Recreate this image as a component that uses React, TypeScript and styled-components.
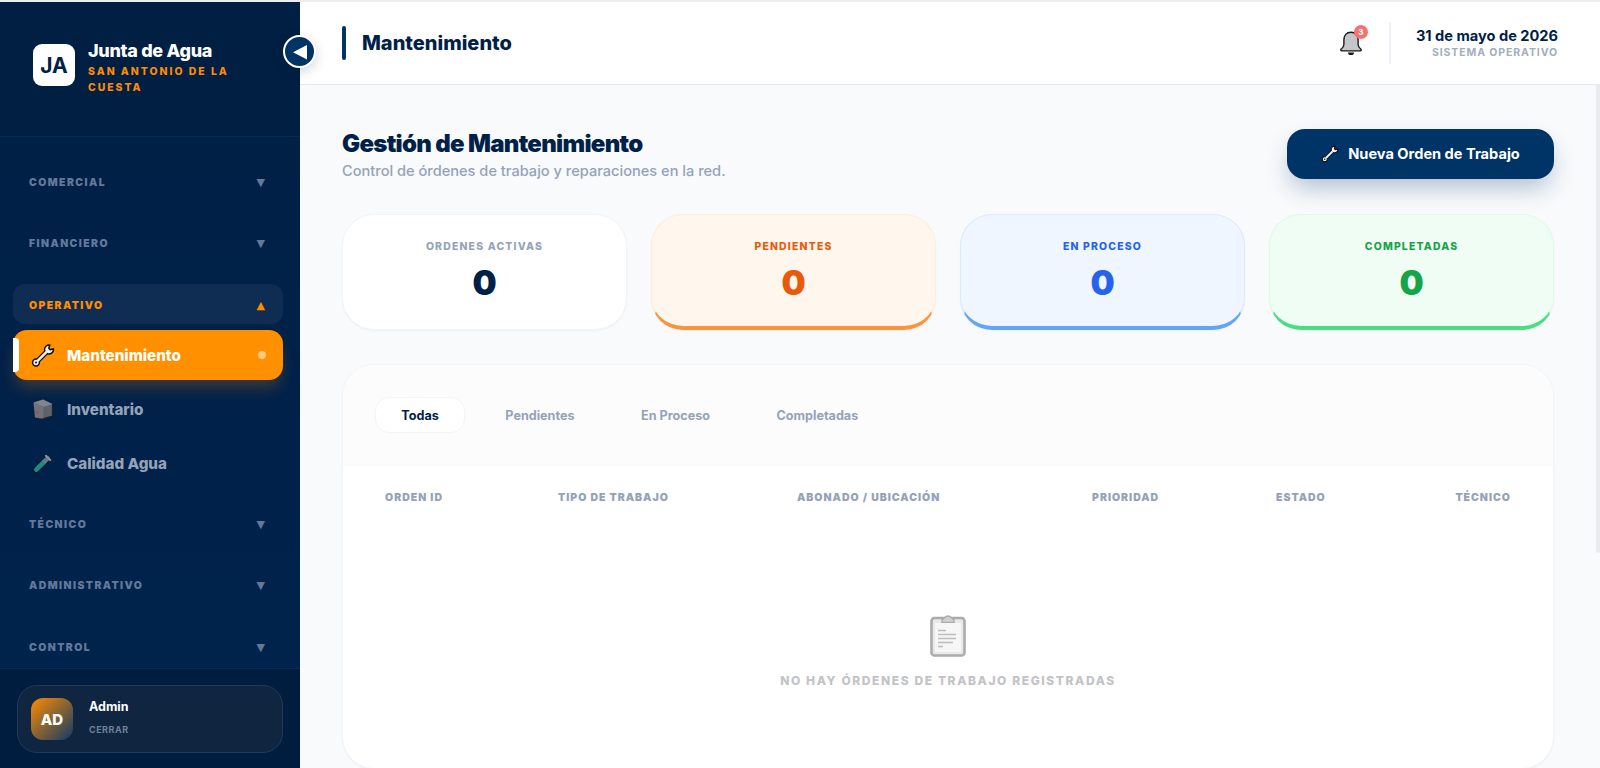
import React from "react";
import styled, { createGlobalStyle } from "styled-components";

const GlobalStyle = createGlobalStyle`
  html, body, #root {
    margin: 0;
    height: 100%;
    overflow: hidden;
  }
  body {
    font-family: "Inter", "Liberation Sans", sans-serif;
    background: #f8fafc;
  }
  * {
    box-sizing: border-box;
  }
`;

const Shell = styled.div`
  height: 100vh;
  display: flex;
  flex-direction: column;
`;

const TopLine = styled.div`
  height: 2px;
  flex: none;
  background: #eceef1;
`;

const Body = styled.div`
  flex: 1;
  min-height: 0;
  display: flex;
`;

const Sidebar = styled.aside`
  width: 300px;
  flex: none;
  position: relative;
  display: flex;
  flex-direction: column;
  background: #002147;
`;

const Brand = styled.div`
  flex: none;
  display: flex;
  align-items: flex-start;
  gap: 13px;
  padding: 35px 33px 40px;
  border-bottom: 1px solid #062a52;
  background: #001f43;
`;

const LogoBox = styled.div`
  width: 42px;
  height: 42px;
  flex: none;
  margin-top: 7px;
  display: flex;
  align-items: center;
  justify-content: center;
  border-radius: 9px;
  background: #fff;
  color: #002147;
  font-size: 21px;
  font-weight: 700;
`;

const BrandText = styled.div`
  min-width: 0;
`;

const BrandTitle = styled.div`
  color: #fff;
  font-size: 18px;
  font-weight: 800;
  line-height: 27px;
  letter-spacing: -0.3px;
`;

const BrandSub = styled.div`
  color: #ff8c00;
  font-size: 10.4px;
  font-weight: 800;
  line-height: 16px;
  letter-spacing: 2px;
  width: 165px;
`;

const ToggleButton = styled.button`
  position: absolute;
  left: 283px;
  top: 33px;
  width: 33px;
  height: 33px;
  padding: 0;
  display: flex;
  align-items: center;
  justify-content: center;
  border: 2px solid #fff;
  border-radius: 50%;
  background: #003366;
  box-shadow: 0 4px 12px rgba(0, 33, 71, 0.18);
  z-index: 2;
`;

const Nav = styled.nav`
  flex: 1;
  min-height: 0;
  overflow: hidden;
  padding: 24px 17px 0 13px;
  background: linear-gradient(180deg, #002046, #00234c);
`;

const Group = styled.div<{ $open?: boolean }>`
  margin-bottom: ${(p) => (p.$open ? "15px" : "21.5px")};
`;

const SectionHeader = styled.div<{ $open?: boolean }>`
  height: 40px;
  display: flex;
  align-items: center;
  justify-content: space-between;
  padding: 2px 18px 0 16px;
  border-radius: 12px;
  background: ${(p) => (p.$open ? "#0f2d53" : "transparent")};
  color: ${(p) => (p.$open ? "#ff8c00" : "#64789a")};
  font-size: 10.4px;
  font-weight: 900;
  letter-spacing: 1.45px;
`;

const Caret = styled.span`
  font-family: "DejaVu Sans", sans-serif;
  font-size: 11px;
  letter-spacing: 0;
`;

const ItemList = styled.div`
  display: flex;
  flex-direction: column;
  gap: 4px;
  margin-top: 6px;
`;

const Item = styled.div<{ $active?: boolean }>`
  position: relative;
  height: 50px;
  display: flex;
  align-items: center;
  gap: 12px;
  padding: 0 16px 0 18px;
  border-radius: 14px;
  background: ${(p) => (p.$active ? "#ff9000" : "transparent")};
  color: ${(p) => (p.$active ? "#fff" : "#94a3b8")};
  font-size: 15.2px;
  font-weight: 800;
  box-shadow: ${(p) => (p.$active ? "0 10px 15px -3px rgba(255, 140, 0, 0.25)" : "none")};
`;

const ItemIcon = styled.span`
  width: 24px;
  height: 24px;
  flex: none;
  display: flex;
  align-items: center;
  justify-content: center;
`;

const ActiveBar = styled.span`
  position: absolute;
  left: 0;
  top: 8px;
  bottom: 8px;
  width: 6px;
  background: #fff;
  border-radius: 0 4px 4px 0;
`;

const ActiveDot = styled.span`
  width: 8px;
  height: 8px;
  margin-left: auto;
  margin-right: 1px;
  border-radius: 50%;
  background: rgba(255, 255, 255, 0.5);
`;

const SidebarFooter = styled.div`
  flex: none;
  height: 100px;
  padding: 16px 17px 15px;
  border-top: 1px solid #0a2a52;
  background: #001d40;
`;

const UserCard = styled.div`
  height: 68px;
  display: flex;
  align-items: center;
  gap: 16px;
  padding: 0 13px;
  border: 1px solid #1f3a5c;
  border-radius: 20px;
  background: #10253f;
`;

const Avatar = styled.div`
  width: 42px;
  height: 42px;
  flex: none;
  display: flex;
  align-items: center;
  justify-content: center;
  border-radius: 12px;
  background: linear-gradient(135deg, #ff8c00, #0f3a66);
  color: #fff;
  font-size: 15px;
  font-weight: 800;
`;

const UserInfo = styled.div`
  display: flex;
  flex-direction: column;
  gap: 10px;
  padding-bottom: 5px;
`;

const UserName = styled.div`
  color: #fff;
  font-size: 12.5px;
  font-weight: 700;
  line-height: 15px;
`;

const LogoutLabel = styled.div`
  color: #6f819c;
  font-size: 9px;
  font-weight: 700;
  line-height: 11px;
  letter-spacing: 0.5px;
`;

const Main = styled.main`
  position: relative;
  flex: 1;
  min-width: 0;
  display: flex;
  flex-direction: column;
`;

const Header = styled.header`
  height: 83px;
  flex: none;
  display: flex;
  align-items: center;
  justify-content: space-between;
  padding: 0 42px;
  background: #fff;
  border-bottom: 1px solid #e2e8f0;
`;

const PageHeading = styled.div`
  display: flex;
  align-items: center;
  gap: 16px;
`;

const AccentBar = styled.span`
  width: 4px;
  height: 34px;
  border-radius: 2px;
  background: #003366;
`;

const PageName = styled.h1`
  margin: 0;
  color: #002147;
  font-size: 20px;
  font-weight: 800;
`;

const HeaderRight = styled.div`
  display: flex;
  align-items: center;
`;

const BellWrap = styled.div`
  position: relative;
  width: 24px;
  height: 26px;
  margin-right: 26px;
`;

const BellBadge = styled.span`
  position: absolute;
  top: -5px;
  right: -5px;
  width: 14px;
  height: 14px;
  display: flex;
  align-items: center;
  justify-content: center;
  border-radius: 50%;
  background: #f87171;
  color: #fff;
  font-size: 8px;
  font-weight: 800;
`;

const HeaderDivider = styled.span`
  width: 2px;
  height: 42px;
  margin-right: 25px;
  background: #eef1f5;
`;

const DateBlock = styled.div`
  text-align: right;
`;

const DateText = styled.div`
  color: #002147;
  font-size: 14.6px;
  font-weight: 700;
  line-height: 20px;
`;

const StatusText = styled.div`
  color: #a0aec0;
  font-size: 10.5px;
  font-weight: 700;
  line-height: 14px;
  letter-spacing: 0.9px;
`;

const Scroller = styled.div`
  flex: 1;
  min-height: 0;
  overflow: hidden;
  padding: 43px 46px 0 42px;
  background: #f8fafc;
`;

const ScrollThumb = styled.div`
  position: absolute;
  top: 82px;
  right: 0;
  width: 4px;
  height: 469px;
  border-radius: 0 0 2px 2px;
  background: #e9ebef;
`;

const PageHead = styled.div`
  display: flex;
  align-items: flex-start;
  justify-content: space-between;
  margin-bottom: 32px;
`;

const TitleBlock = styled.div`
  padding-top: 2px;
`;

const PageTitle = styled.h2`
  margin: 0 0 2px;
  color: #002147;
  font-size: 24px;
  font-weight: 900;
  line-height: 28px;
  letter-spacing: -0.7px;
`;

const PageSub = styled.p`
  margin: 0;
  color: #94a3b8;
  font-size: 14.6px;
  font-weight: 500;
  line-height: 22px;
`;

const PrimaryButton = styled.button`
  width: 267px;
  height: 50px;
  margin-top: 1px;
  display: flex;
  align-items: center;
  justify-content: center;
  gap: 9px;
  border: 0;
  border-radius: 18px;
  background: #003366;
  color: #fff;
  font-family: inherit;
  font-size: 14.6px;
  font-weight: 700;
  box-shadow: 0 12px 24px -4px rgba(0, 51, 102, 0.3);
`;

const StatGrid = styled.div`
  display: grid;
  grid-template-columns: repeat(4, 1fr);
  gap: 24px;
  margin-bottom: 34px;
`;

const StatCard = styled.div<{ $bg: string; $border: string; $accent?: string }>`
  height: 116px;
  padding-top: 25px;
  text-align: center;
  border: 1px solid ${(p) => p.$border};
  border-bottom: ${(p) => (p.$accent ? `4px solid ${p.$accent}` : `1px solid ${p.$border}`)};
  border-radius: 32px;
  background: ${(p) => p.$bg};
  box-shadow: 0 1px 2px rgba(0, 0, 0, 0.04);
`;

const StatLabel = styled.div<{ $color: string }>`
  color: ${(p) => p.$color};
  font-size: 10.4px;
  font-weight: 800;
  line-height: 14px;
  letter-spacing: 1.2px;
`;

const StatValue = styled.div<{ $color: string }>`
  margin-top: 7px;
  color: ${(p) => p.$color};
  font-size: 34px;
  font-weight: 900;
  line-height: 44px;
`;

const TableCard = styled.section`
  height: 405px;
  border: 1px solid #f1f5f9;
  border-radius: 32px;
  background: #fff;
  overflow: hidden;
  box-shadow: 0 1px 2px rgba(0, 0, 0, 0.03);
`;

const TabsBar = styled.div`
  height: 101px;
  display: flex;
  align-items: flex-start;
  gap: 14px;
  padding: 32px 32px 0;
  background: #fcfcfd;
`;

const Tab = styled.div<{ $active?: boolean }>`
  height: 36px;
  display: flex;
  align-items: center;
  padding: 0 25.3px;
  border: 1px solid ${(p) => (p.$active ? "#f1f5f9" : "transparent")};
  border-radius: 14px;
  background: ${(p) => (p.$active ? "#fff" : "transparent")};
  color: ${(p) => (p.$active ? "#002147" : "#94a3b8")};
  font-size: 12.6px;
  font-weight: 700;
`;

const TableHead = styled.div`
  display: grid;
  grid-template-columns: 173px 239px 295px 184px 100px 1fr;
  padding: 25px 42px 0;
  color: #94a3b8;
  font-size: 10.5px;
  font-weight: 900;
  line-height: 14px;
  letter-spacing: 1px;
`;

const LastHead = styled.div`
  text-align: right;
`;

const EmptyState = styled.div`
  display: flex;
  flex-direction: column;
  align-items: center;
  padding-top: 109px;
  gap: 16px;
`;

const EmptyText = styled.div`
  color: #c2c3c5;
  font-size: 12px;
  font-weight: 800;
  line-height: 16px;
  letter-spacing: 1.6px;
`;

const WrenchIcon = ({ size }: { size: number }) => (
  <svg width={size} height={size} viewBox="0 0 24 24" fill="none" strokeLinejoin="round">
    <path d="M5 19 L17 7" stroke="#111" strokeWidth="5" />
    <path d="M18.78 1.57 L17.8 4.8 L19.2 6.2 L22.43 5.22 A4.5 4.5 0 1 1 18.78 1.57 Z" fill="#f1f1f1" stroke="#111" strokeWidth="1.5" />
    <circle cx="5" cy="19" r="3.4" fill="#f1f1f1" stroke="#111" strokeWidth="1.5" />
    <circle cx="5" cy="19" r="1" fill="#111" />
    <path d="M6.6 17.4 L15.6 8.4" stroke="#f1f1f1" strokeWidth="2.6" />
  </svg>
);

const BoxIcon = () => (
  <svg width="22" height="22" viewBox="0 0 22 22">
    <path d="M1.5 4.5 L11 1.5 L20.5 6 L20.5 18 L11 20.8 L3 19.5 Z" fill="#5d6169" stroke="#17212f" strokeWidth="1.2" strokeLinejoin="round" />
    <path d="M1.5 4.5 L11 1.5 L20.5 6 L11.5 9 Z" fill="#7f8590" />
    <path d="M1.5 4.5 L11.5 9 L11 20.8 L3 19.5 Z" fill="#6f7279" />
    <rect x="4" y="13" width="2.5" height="2.5" fill="#a34a6b" />
  </svg>
);

const TubeIcon = () => (
  <svg width="22" height="22" viewBox="0 0 22 22" strokeLinecap="round">
    <path d="M4 18 L15.5 6.5" stroke="#0d1b2a" strokeWidth="7" />
    <path d="M4.3 17.7 L12.5 9.5" stroke="#1f8a85" strokeWidth="4.6" />
    <path d="M12.8 9.2 L15.6 6.4" stroke="#5d7b8e" strokeWidth="4.4" />
    <path d="M14 3.8 L18.2 8" stroke="#7d94a6" strokeWidth="2.2" />
  </svg>
);

const BellIcon = () => (
  <svg width="24" height="26" viewBox="0 0 24 26">
    <path d="M12 2.2 c-4.6 0 -7.1 3.3 -7.1 7.8 v4.4 c0 2 -1.4 3.5 -2.9 4.9 c-.6 .6 -.2 1.6 .7 1.6 h18.6 c.9 0 1.3 -1 .7 -1.6 c-1.5 -1.4 -2.9 -2.9 -2.9 -4.9 V10 c0 -4.5 -2.5 -7.8 -7.1 -7.8 z" fill="#c4c6c9" stroke="#1a1a1a" strokeWidth="1.4" strokeLinejoin="round" />
    <path d="M9 22.5 a3 2.6 0 0 0 6 0 z" fill="#1a1a1a" />
  </svg>
);

const ClipboardIcon = () => (
  <svg width="36" height="43" viewBox="0 0 36 43">
    <rect x="1.5" y="4" width="33" height="37.5" rx="3" fill="#e9e9e9" stroke="#acacac" strokeWidth="2.6" />
    <path d="M12 5.5 c2 0 2.8 -3.5 6 -3.5 s4 3.5 6 3.5 v3 H12 z" fill="#d0d0d0" stroke="#acacac" strokeWidth="1.4" />
    <rect x="5" y="9" width="26" height="29" fill="#f6f6f6" />
    <path d="M8 16.5 h8 M8 20.5 h18 M8 24.5 h18 M8 28.5 h15 M8 32.5 h5" stroke="#bdbdbd" strokeWidth="1.3" />
  </svg>
);

const sections = ["COMERCIAL", "FINANCIERO"];
const lowerSections = ["TÉCNICO", "ADMINISTRATIVO", "CONTROL"];

const stats = [
  { label: "ORDENES ACTIVAS", labelColor: "#94a3b8", color: "#002147", bg: "#fff", border: "#f1f5f9" },
  { label: "PENDIENTES", labelColor: "#ea580c", color: "#ea580c", bg: "#fff7ed", border: "#ffedd5", accent: "#fb923c" },
  { label: "EN PROCESO", labelColor: "#2563eb", color: "#2563eb", bg: "#eff6ff", border: "#dbeafe", accent: "#60a5fa" },
  { label: "COMPLETADAS", labelColor: "#16a34a", color: "#16a34a", bg: "#f0fdf4", border: "#dcfce7", accent: "#4ade80" },
];

const App: React.FC = () => {
  return (
    <Shell>
      <GlobalStyle />
      <TopLine />
      <Body>
        <Sidebar>
          <Brand>
            <LogoBox>JA</LogoBox>
            <BrandText>
              <BrandTitle>Junta de Agua</BrandTitle>
              <BrandSub>SAN ANTONIO DE LA CUESTA</BrandSub>
            </BrandText>
          </Brand>
          <ToggleButton aria-label="Contraer menú">
            <svg width="18" height="18" viewBox="0 0 18 18">
              <path d="M16 2 V16.5 L2 9.2 Z" fill="#fff" />
            </svg>
          </ToggleButton>
          <Nav>
            {sections.map((name) => (
              <Group key={name}>
                <SectionHeader>
                  {name}
                  <Caret>▼</Caret>
                </SectionHeader>
              </Group>
            ))}
            <Group $open>
              <SectionHeader $open>
                OPERATIVO
                <Caret>▲</Caret>
              </SectionHeader>
              <ItemList>
                <Item $active>
                  <ActiveBar />
                  <ItemIcon>
                    <WrenchIcon size={25} />
                  </ItemIcon>
                  Mantenimiento
                  <ActiveDot />
                </Item>
                <Item>
                  <ItemIcon>
                    <BoxIcon />
                  </ItemIcon>
                  Inventario
                </Item>
                <Item>
                  <ItemIcon>
                    <TubeIcon />
                  </ItemIcon>
                  Calidad Agua
                </Item>
              </ItemList>
            </Group>
            {lowerSections.map((name) => (
              <Group key={name}>
                <SectionHeader>
                  {name}
                  <Caret>▼</Caret>
                </SectionHeader>
              </Group>
            ))}
          </Nav>
          <SidebarFooter>
            <UserCard>
              <Avatar>AD</Avatar>
              <UserInfo>
                <UserName>Admin</UserName>
                <LogoutLabel>CERRAR</LogoutLabel>
              </UserInfo>
            </UserCard>
          </SidebarFooter>
        </Sidebar>
        <Main>
          <Header>
            <PageHeading>
              <AccentBar />
              <PageName>Mantenimiento</PageName>
            </PageHeading>
            <HeaderRight>
              <BellWrap>
                <BellIcon />
                <BellBadge>3</BellBadge>
              </BellWrap>
              <HeaderDivider />
              <DateBlock>
                <DateText>31 de mayo de 2026</DateText>
                <StatusText>SISTEMA OPERATIVO</StatusText>
              </DateBlock>
            </HeaderRight>
          </Header>
          <Scroller>
            <PageHead>
              <TitleBlock>
                <PageTitle>Gestión de Mantenimiento</PageTitle>
                <PageSub>Control de órdenes de trabajo y reparaciones en la red.</PageSub>
              </TitleBlock>
              <PrimaryButton>
                <WrenchIcon size={18} />
                Nueva Orden de Trabajo
              </PrimaryButton>
            </PageHead>
            <StatGrid>
              {stats.map((s) => (
                <StatCard key={s.label} $bg={s.bg} $border={s.border} $accent={s.accent}>
                  <StatLabel $color={s.labelColor}>{s.label}</StatLabel>
                  <StatValue $color={s.color}>0</StatValue>
                </StatCard>
              ))}
            </StatGrid>
            <TableCard>
              <TabsBar>
                <Tab $active>Todas</Tab>
                <Tab>Pendientes</Tab>
                <Tab>En Proceso</Tab>
                <Tab>Completadas</Tab>
              </TabsBar>
              <TableHead>
                <div>ORDEN ID</div>
                <div>TIPO DE TRABAJO</div>
                <div>ABONADO / UBICACIÓN</div>
                <div>PRIORIDAD</div>
                <div>ESTADO</div>
                <LastHead>TÉCNICO</LastHead>
              </TableHead>
              <EmptyState>
                <ClipboardIcon />
                <EmptyText>NO HAY ÓRDENES DE TRABAJO REGISTRADAS</EmptyText>
              </EmptyState>
            </TableCard>
          </Scroller>
          <ScrollThumb />
        </Main>
      </Body>
    </Shell>
  );
};

export default App;
